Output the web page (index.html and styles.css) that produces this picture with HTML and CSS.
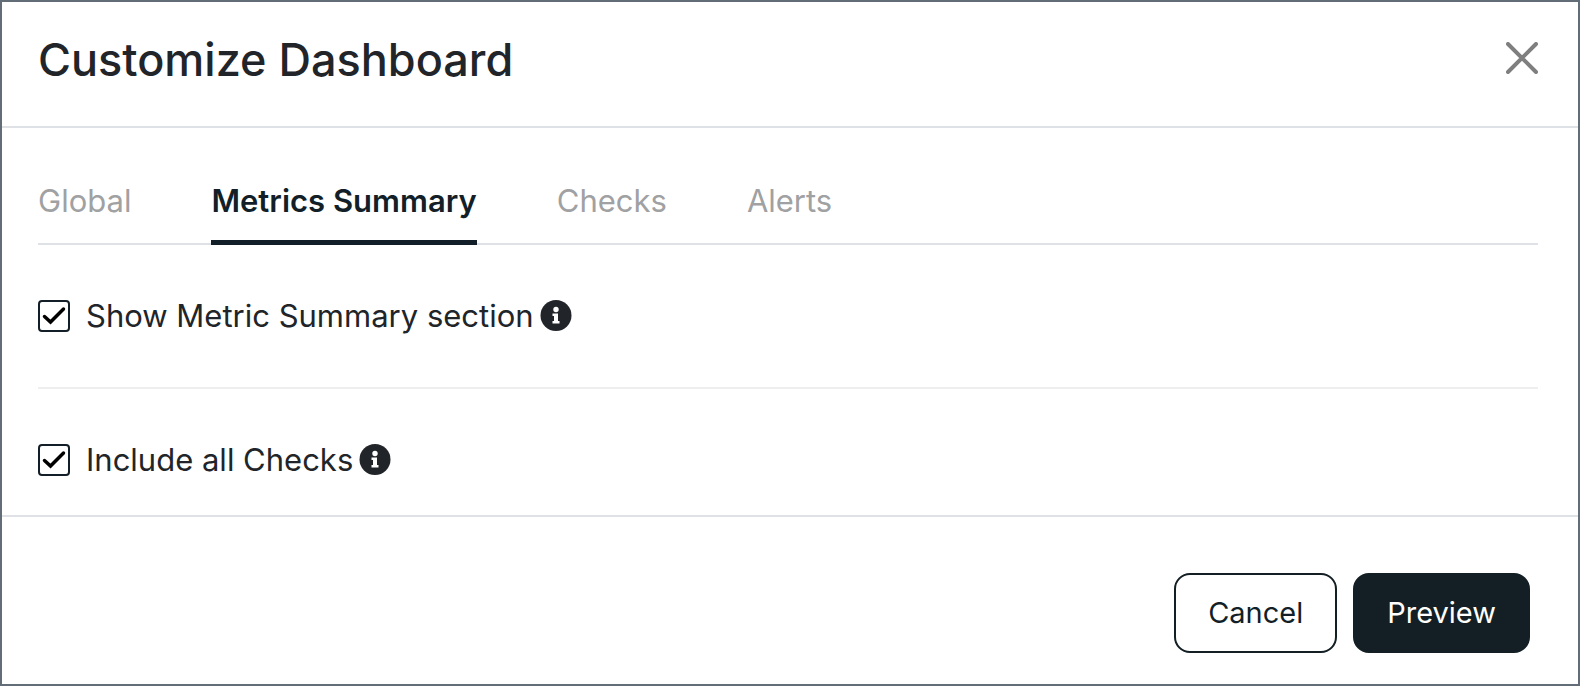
FILE: index.html
```html
<!DOCTYPE html>
<html lang="en">
<head>
<meta charset="utf-8">
<title>Customize Dashboard</title>
<link rel="stylesheet" href="styles.css">
</head>
<body>
<div class="modal" role="dialog" aria-labelledby="modal-title">
  <header class="modal-header">
    <h1 class="modal-title" id="modal-title">Customize Dashboard</h1>
    <button class="close" type="button" aria-label="Close">
      <svg viewBox="0 0 32 32" aria-hidden="true"><path d="M2 2 30 30M30 2 2 30" fill="none" stroke="currentColor" stroke-width="4" stroke-linecap="round"/></svg>
    </button>
  </header>
  <main class="modal-body">
    <div class="tabs" role="tablist">
      <button class="tab" type="button" role="tab" aria-selected="false">Global</button>
      <button class="tab tab-active" type="button" role="tab" aria-selected="true">Metrics Summary</button>
      <button class="tab" type="button" role="tab" aria-selected="false">Checks</button>
      <button class="tab" type="button" role="tab" aria-selected="false">Alerts</button>
    </div>
    <div class="option">
      <span class="check">
        <input class="check-input" type="checkbox" id="show-summary" checked>
        <svg class="check-mark" viewBox="0 0 32 32" aria-hidden="true"><path d="M6.500 16.500 12.500 22 25.500 9" fill="none" stroke="currentColor" stroke-width="3.500" stroke-linecap="round"/></svg>
      </span>
      <label class="option-label" for="show-summary">Show Metric Summary section</label>
      <svg class="info" viewBox="0 0 32 32" role="img" aria-label="Information"><circle cx="16" cy="15.500" r="15.500" fill="currentColor"/><circle cx="16" cy="9.500" r="2.700" fill="#fff"/><path d="M12.500 13.500h5.500v7.500h1.500V23.500h-7v-2.500H14v-5h-1.500z" fill="#fff"/></svg>
    </div>
    <div class="option">
      <span class="check">
        <input class="check-input" type="checkbox" id="all-checks" checked>
        <svg class="check-mark" viewBox="0 0 32 32" aria-hidden="true"><path d="M6.500 16.500 12.500 22 25.500 9" fill="none" stroke="currentColor" stroke-width="3.500" stroke-linecap="round"/></svg>
      </span>
      <label class="option-label" for="all-checks">Include all Checks</label>
      <svg class="info" viewBox="0 0 32 32" role="img" aria-label="Information"><circle cx="16" cy="15.500" r="15.500" fill="currentColor"/><circle cx="16" cy="9.500" r="2.700" fill="#fff"/><path d="M12.500 13.500h5.500v7.500h1.500V23.500h-7v-2.500H14v-5h-1.500z" fill="#fff"/></svg>
    </div>
  </main>
  <footer class="modal-footer">
    <button class="btn" type="button">Cancel</button>
    <button class="btn btn-primary" type="button">Preview</button>
  </footer>
</div>
</body>
</html>
```

FILE: styles.css
```css
* {
  box-sizing: border-box;
}

body {
  margin: 0;
  background: #fff;
  color: #212529;
  font-family: Inter, "Liberation Sans", sans-serif;
  font-size: 31px;
  line-height: 40px;
}

button {
  font: inherit;
  cursor: pointer;
}

.modal {
  display: flex;
  flex-direction: column;
  min-height: 100vh;
  border: 2px solid #636d77;
}

.modal-header {
  display: flex;
  align-items: flex-start;
  justify-content: space-between;
  padding: 28px 40px 36px 36px;
  border-bottom: 2px solid #dee2e6;
}

.modal-title {
  margin: 0;
  font-size: 45px;
  font-weight: 500;
  line-height: 60px;
}

.close {
  display: flex;
  margin-top: 12px;
  padding: 0;
  border: 0;
  background: none;
  color: #7f7f7f;
}

.close svg {
  width: 32px;
  height: 32px;
}

.modal-body {
  padding: 53px 40px 0 36px;
}

.tabs {
  display: flex;
  gap: 80px;
  border-bottom: 2px solid #dee2e6;
}

.tab {
  margin-bottom: -2px;
  padding: 0 0 19px;
  border: 0;
  border-bottom: 5px solid transparent;
  background: none;
  color: #9fa1a2;
}

.tab-active {
  border-bottom-color: #131f28;
  color: #131f28;
  font-weight: 600;
}

.option {
  display: flex;
  align-items: center;
  padding: 51px 0;
  border-bottom: 2px solid #eee;
}

.option:last-child {
  padding-bottom: 35px;
  border-bottom: 0;
}

.check {
  display: grid;
  margin-right: 16px;
}

.check-input,
.check-mark {
  grid-area: 1 / 1;
  width: 32px;
  height: 32px;
}

.check-input {
  margin: 0;
  border: 2px solid #131f28;
  border-radius: 4px;
  appearance: none;
}

.check-mark {
  color: #000;
  pointer-events: none;
  visibility: hidden;
}

.check-input:checked + .check-mark {
  visibility: visible;
}

.info {
  width: 32px;
  height: 32px;
  margin-left: 6px;
}

.modal-footer {
  display: flex;
  flex: 1;
  align-items: flex-start;
  justify-content: flex-end;
  gap: 16px;
  padding: 56px 48px 31px;
  border-top: 2px solid #dee2e6;
}

.btn {
  padding: 18px 32px;
  border: 2px solid #131f24;
  border-radius: 16px;
  background: #fff;
  color: #131f28;
  font-size: 29px;
}

.btn-primary {
  background: #131f24;
  color: #fff;
}
```
